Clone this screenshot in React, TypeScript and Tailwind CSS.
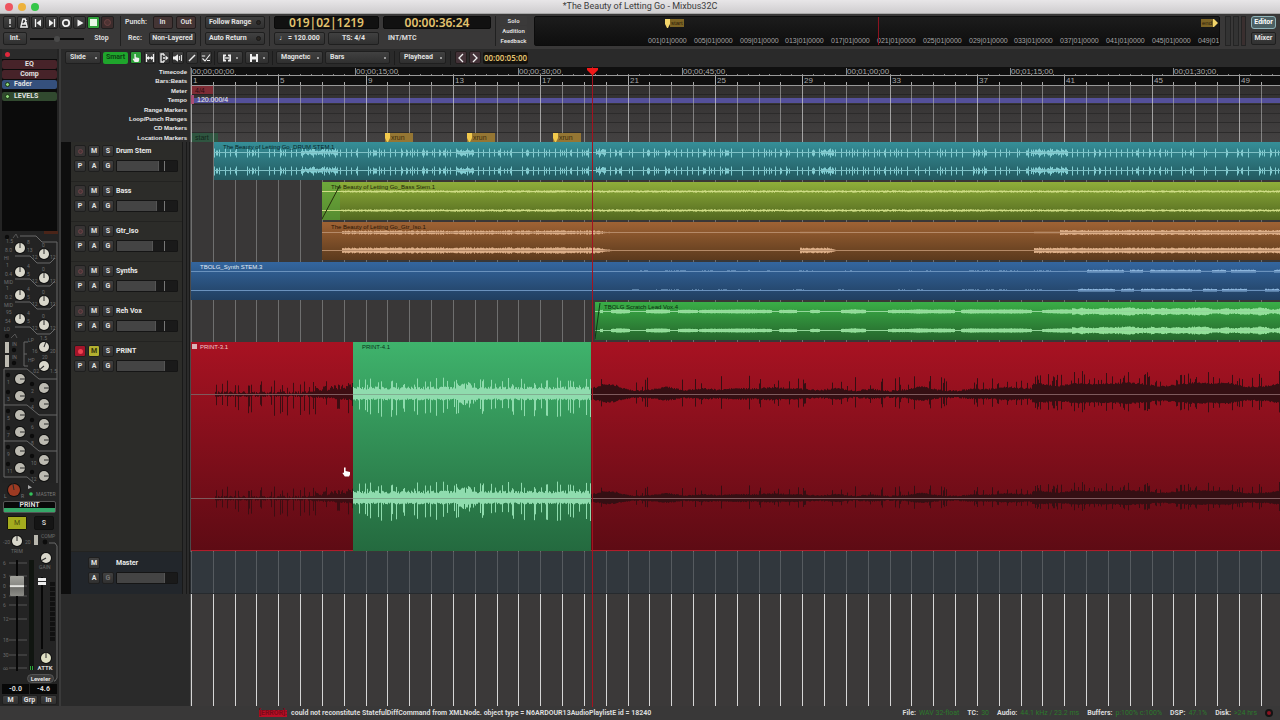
import type { ReactNode } from "react";

const BAR = 21.83;
const SECOND = BAR / 2;
const BARS = 86;
const CANVAS = 1900;

const rand = (n: number) => {
  const s = Math.sin(n * 127.1 + 311.7) * 43758.5453;
  return s - Math.floor(s);
};
const smooth = (x: number, size: number, seed: number) => {
  const i = Math.floor(x / size);
  const f = x / size - i;
  return rand(i + seed) * (1 - f) + rand(i + 1 + seed) * f;
};

type Envelope = (x: number, channel: number) => [number, number];

/* Envelopes take the distance from the start of the session in pixels. */
const drumEnv: Envelope = (x) => {
  const burst = [[110, 148], [266, 284], [405, 416], [630, 644], [840, 878]].some(([a, b]) => x > a && x < b);
  const r = rand(x * 3);
  if ((x - 24) % 11 === 0) return [4, 5];
  if ((x - 24) % 11 === 5 && r > 0.3) return [3, 4];
  if (burst) return [1 + r * 2.5, 1 + rand(x * 5) * 2.5];
  return r > 0.88 ? [2, 3] : [0.5, 0.5];
};
const bassEnv: Envelope = (x) => (x < 150 ? [0.4, 0.4] : [0.5 + rand(x) * 0.8, 0.5 + rand(x + 9) * 0.8]);
const guitarEnv: Envelope = (x, c) => {
  if (x > 150 && x < 424) {
    const end = x > 405 ? (424 - x) / 19 : 1;
    const a = (1 + rand(x) * 1.2 + c) * end;
    return [a, a];
  }
  if (x > 608 && x < 646) {
    const a = (c ? 2 + rand(x) : 0.6) * Math.min(1, (646 - x) / 8);
    return [a, a];
  }
  if (x > 842) {
    const a = c ? 2 + rand(x) : x > 868 ? 1.6 + rand(x) : 0.7;
    return [a, a];
  }
  return [0.4, 0.4];
};
const synthEnv: Envelope = (x, c) => {
  const v = smooth(x, 9, 40 + c);
  if (x > 876) return v > 0.3 ? [1.2 + rand(x) * 0.8, 1] : [0.6, 0.5];
  if (x > 440) return v > 0.55 && rand(x) > 0.4 ? [1, 0.4] : [0.4, 0.4];
  return [0.4, 0.4];
};
const voxEnv: Envelope = (x) => {
  if (x < 409) return [0.4, 0.4];
  if (x > 880) {
    const a = 1.4 + smooth(x, 5, 7) * 2 + rand(x);
    return [a, a];
  }
  const v = smooth(x, 13, 3);
  const a = v > 0.3 ? 1 + v + rand(x) * 0.4 : 0.5;
  return [a, a];
};
const hit = (x: number) => x % 11 === 3 || x % 13 === 5 || x % 29 === 2;
const printIntroEnv: Envelope = (x, c) => {
  const k = c ? 0.85 : 1;
  if (x < 24) return [0.4, 0.4];
  const swell = x > 116 ? 2 + ((x - 116) / 46) * 4 : 0.8;
  if (hit(x)) return [(5 + rand(x) * 9) * k, (10 + rand(x + 4) * 12) * k];
  return [(swell + rand(x * 7) * (x > 120 ? 5 : 2.5)) * k, (swell * 0.7 + rand(x * 5) * 2) * k];
};
const printMidEnv: Envelope = (x) => {
  const burst = x > 265 && x < 285 ? 5 : 0;
  if (hit(x)) return [9 + rand(x) * 8, 12 + rand(x + 4) * 11];
  return [5 + rand(x * 3) * 3 + burst * rand(x), 4 + rand(x * 5) * 2 + burst * rand(x + 1)];
};
const printOutroEnv: Envelope = (x, c) => {
  const k = c ? 0.7 : 1;
  const late = x > 840 ? 4 : 0;
  const near = x < 430 ? Math.max(0, 6 - Math.abs(x - 412) * 0.4) : 0;
  const base = 2.5 + smooth(x, 17, 11) * 5 + late + near;
  const peak = rand(x * 11) > (late ? 0.78 : 0.88) ? 4 + rand(x) * 9 : 0;
  return [(base + peak + rand(x) * 1.5) * k, (base * 0.75 + peak * 0.8 + rand(x + 3) * 1.5) * k];
};

function wavePath(from: number, to: number, centre: number, channel: number, env: Envelope) {
  let d = "";
  for (let x = from; x < to; x++) {
    const [up, down] = env(x, channel);
    d += `M${x - from + 0.5} ${(centre - up).toFixed(1)}V${(centre + down).toFixed(1)}`;
  }
  return d;
}

function Wave({ from, to, centres, env, color, line }: { from: number; to: number; centres: number[]; env: Envelope; color: string; line: string }) {
  return (
    <svg className="pointer-events-none absolute inset-0 h-full" width={to - from} aria-hidden="true">
      {centres.map((c, i) => (
        <g key={c}>
          <path d={wavePath(from, to, c, i, env)} stroke={color} strokeWidth="1" fill="none" />
          <path d={`M0 ${c}H${to - from}`} stroke={line} strokeWidth="1" />
        </g>
      ))}
    </svg>
  );
}

function Grid({ color, major }: { color: string; major?: string }) {
  return (
    <svg className="pointer-events-none absolute inset-0 h-full" width={CANVAS} aria-hidden="true">
      {Array.from({ length: BARS }, (_, i) => (
        <rect key={i} x={Math.round(i * BAR)} y="0" width="1" height="100%" fill={i % 4 === 0 && major ? major : color} />
      ))}
    </svg>
  );
}

const face = "rounded-[2px] border border-[#1f1f1f] bg-linear-to-b from-[#414141] to-[#303030] text-[7px] leading-none font-bold text-[#e2e2e2]";

function Btn({ children, className = "", label }: { children?: ReactNode; className?: string; label?: string }) {
  return (
    <button type="button" aria-label={label} className={`flex items-center justify-center whitespace-nowrap ${face} ${className}`}>
      {children}
    </button>
  );
}

function Choice({ label, value, className }: { label: string; value: string; className: string }) {
  return (
    <span className={`relative flex h-[13px] items-center ${className}`}>
      <select aria-label={label} className={`h-full w-full appearance-none pl-[4px] ${face}`}>
        <option>{value}</option>
      </select>
      <span className="pointer-events-none absolute right-[4px] h-[2px] w-[2px] bg-[#999]" />
    </span>
  );
}

const Sep = () => <span className="h-[30px] w-px shrink-0 bg-[#202020]" />;

const Icon = ({ children, size = 10 }: { children: ReactNode; size?: number }) => (
  <svg width={size} height={size} viewBox="0 0 10 10" fill="none" stroke="#f0f0f0" strokeWidth="1.3" aria-hidden="true">
    {children}
  </svg>
);

function Transport() {
  const b = "h-[13px] w-[13px]";
  return (
    <div className="flex gap-px">
      <Btn label="Panic" className={b}><Icon><path d="M5 1v5M5 7.5v1.6" /></Icon></Btn>
      <Btn label="Metronome" className={b}><Icon><path d="M3.8 1h2.4l2 8H1.8zM2.6 6h5M5 6 7.5 2" /></Icon></Btn>
      <Btn label="Go to start" className={b}><Icon><path d="M2.5 1v8" /><path d="M8 1.5v7L3.5 5z" fill="#f0f0f0" stroke="none" /></Icon></Btn>
      <Btn label="Go to end" className={b}><Icon><path d="M7.5 1v8" /><path d="M2 1.5v7L6.5 5z" fill="#f0f0f0" stroke="none" /></Icon></Btn>
      <Btn label="Loop" className={b}><Icon><circle cx="5" cy="5" r="3.2" strokeWidth="1.8" /></Icon></Btn>
      <Btn label="Play" className={b}><Icon><path d="M2.5 1.5v7L8.5 5z" fill="#f0f0f0" stroke="none" /></Icon></Btn>
      <button type="button" aria-label="Stop" className="flex h-[13px] w-[13px] items-center justify-center rounded-[2px] border border-[#1f1f1f] bg-[#2fa03a]">
        <span className="h-[7px] w-[7px] bg-[#e9f7e6]" />
      </button>
      <button type="button" aria-label="Record" className="flex h-[13px] w-[13px] items-center justify-center rounded-[2px] border border-[#1f1f1f] bg-[#3d2c2c]">
        <span className="h-[7px] w-[7px] rounded-full border border-[#6d4343] bg-[#4e3333]" />
      </button>
    </div>
  );
}

function Toggle({ children }: { children: string }) {
  return (
    <button type="button" className={`flex h-[13px] items-center justify-between pr-[3px] pl-[3px] whitespace-nowrap ${face}`}>
      {children}
      <span className="h-[5px] w-[5px] rounded-full border border-[#191919] bg-[#2a2520]" />
    </button>
  );
}

function Minimap() {
  return (
    <div className="relative h-[30px] min-w-0 flex-1 overflow-hidden rounded-[2px] border border-[#0c0c0c] bg-linear-to-b from-[#1c1c1c] to-[#0e0e0e] font-['Liberation_Sans',Arial,sans-serif]">
      <span className="absolute top-[2px] left-[130px] flex items-start">
        <svg width="5" height="9" aria-hidden="true"><path d="M0 0H5V5L3 9H2L0 5Z" fill="#f2d46a" /></svg>
        <span className="h-[8px] bg-[#7d6424] px-[1px] text-[6px] leading-[8px] text-[#2a200a]">start</span>
      </span>
      <span className="absolute top-[2px] right-[1px] flex items-start">
        <span className="h-[8px] bg-[#7d6424] px-[1px] text-[6px] leading-[8px] text-[#2a200a]">end</span>
        <svg width="5" height="8" aria-hidden="true"><path d="M0 0H1L5 4L1 8H0Z" fill="#f2d46a" /></svg>
      </span>
      {Array.from({ length: 13 }, (_, i) => (
        <span key={i} className="absolute bottom-0 text-[7px] leading-[8px] whitespace-nowrap text-[#a5a5a5]" style={{ left: Math.round(113 + i * 45.8) }}>
          {String(1 + i * 4).padStart(3, "0")}|01|0000
        </span>
      ))}
      <span className="absolute inset-y-0 left-[343px] w-px bg-[#8c1320]" />
    </div>
  );
}

function TopBar() {
  const clock = "flex h-[13px] items-center justify-center rounded-[2px] border border-[#0a0a0a] bg-[#111] font-['Noto_Sans'] text-[12px] leading-none font-semibold text-[#e2c26e]";
  return (
    <div className="flex h-[35px] items-start gap-[4px] bg-[#393838] pt-[2px] pr-[4px] pl-[3px]">
      <div className="flex w-[113px] shrink-0 flex-col gap-[3px]">
        <Transport />
        <div className="flex items-center gap-[3px]">
          <Btn className="h-[13px] w-[24px]">Int.</Btn>
          <input
            type="range"
            aria-label="Shuttle speed"
            defaultValue={50}
            className="h-[2px] w-[54px] appearance-none bg-[#0d0d0d] [&::-webkit-slider-thumb]:h-[6px] [&::-webkit-slider-thumb]:w-[6px] [&::-webkit-slider-thumb]:appearance-none [&::-webkit-slider-thumb]:rounded-full [&::-webkit-slider-thumb]:bg-[#4a4a4a]"
          />
          <span className="flex-1 text-center text-[7px] font-bold">Stop</span>
        </div>
      </div>
      <Sep />
      <div className="flex w-[71px] shrink-0 flex-col gap-[3px] text-[7px] font-bold">
        <div className="flex items-center justify-between">
          <span className="w-[24px]">Punch:</span>
          <button type="button" className="h-[13px] w-[20px] rounded-[2px] border border-[#221c1c] bg-[#443535]">In</button>
          <button type="button" className="h-[13px] w-[20px] rounded-[2px] border border-[#221c1c] bg-[#443535]">Out</button>
        </div>
        <div className="flex items-center justify-between">
          <span className="w-[24px] pl-[3px]">Rec:</span>
          <Btn className="h-[13px] w-[47px]">Non-Layered</Btn>
        </div>
      </div>
      <Sep />
      <div className="flex w-[60px] shrink-0 flex-col gap-[3px]">
        <Toggle>Follow Range</Toggle>
        <Toggle>Auto Return</Toggle>
      </div>
      <Sep />
      <div className="flex w-[105px] shrink-0 flex-col gap-[3px]">
        <div className={clock}>019|02|1219</div>
        <div className="grid grid-cols-2 gap-[3px]">
          <Btn className="h-[13px]">♩ = 120.000</Btn>
          <Btn className="h-[13px]">TS: 4/4</Btn>
        </div>
      </div>
      <div className="flex w-[108px] shrink-0 flex-col gap-[3px]">
        <div className={clock}>00:00:36:24</div>
        <span className="pl-[5px] text-[7px] leading-[13px] font-bold">INT/MTC</span>
      </div>
      <Sep />
      <div className="flex w-[30px] shrink-0 flex-col gap-px text-[6px] font-bold">
        {["Solo", "Audition", "Feedback"].map((t) => (
          <button key={t} type="button" className="mr-[3px] h-[9px] rounded-[1px] bg-[#3b3a3a] leading-[9px]">{t}</button>
        ))}
      </div>
      <Minimap />
      <div className="flex h-[30px] w-[23px] shrink-0 gap-[2px] pl-[1px]">
        <span className="w-[6px] border border-[#242424] bg-[#333]" />
        <span className="w-[6px] border border-[#242424] bg-[#333]" />
        <span className="w-[5px] border border-[#242424] bg-[#3a2f2f]" />
      </div>
      <div className="flex w-[25px] shrink-0 flex-col gap-[3px]">
        <button type="button" className="h-[13px] rounded-[3px] border border-[#8fb3b8] bg-[#4c6064] text-[7px] leading-none font-bold text-white">Editor</button>
        <Btn className="h-[13px]">Mixer</Btn>
      </div>
    </div>
  );
}

function EditBar() {
  const b = "h-[13px] w-[12px]";
  return (
    <div className="flex h-[17px] items-center gap-[2px] overflow-hidden bg-[#2a2a2a] pl-[4px]">
      <Choice label="Edit mode" value="Slide" className="w-[36px]" />
      <button type="button" className="h-[12px] w-[25px] rounded-[2px] bg-[#1fa52c] text-[7px] leading-none font-bold text-[#0b4412]">Smart</button>
      <button type="button" aria-label="Grab" className="flex h-[13px] w-[12px] items-center justify-center rounded-[2px] border border-[#1f1f1f] bg-[#2fa03a]">
        <Icon><path d="M3.4 1h1.4v3.2l3.4.9V7L7.4 9H3.6L1.6 6l.8-.6 1 .8z" fill="#f0f0f0" stroke="none" /></Icon>
      </button>
      <Btn label="Range" className={b}><Icon><path d="M1.5 1v8M8.5 1v8M2 5h6" /><path d="M1.5 5 4 3v4zM8.5 5 6 3v4z" fill="#f0f0f0" stroke="none" /></Icon></Btn>
      <Btn label="Cut" className={b}><Icon><path d="M5 1H2v8h3M5 1v2M5 7v2M4 5h2" /><path d="M9.5 5 6.5 2.6v4.8z" fill="#f0f0f0" stroke="none" /></Icon></Btn>
      <Btn label="Audition" className={b}><Icon><path d="M0 3.5h2L5 1.2v7.6L2 6.5H0z" fill="#f0f0f0" stroke="none" /><path d="M6.4 3v4M8.4 2v6" strokeWidth="1" /></Icon></Btn>
      <Btn label="Draw" className={b}><Icon><path d="M2 8 8 2" strokeWidth="1.4" /></Icon></Btn>
      <Btn label="Edit contents" className={b}><Icon><path d="M0.8 3h3.4M1.5 5.5 4 8 9 1.5M6 7.5h3" strokeWidth="1.1" /></Icon></Btn>
      <span className="h-[14px] w-px bg-[#1c1c1c]" />
      <button type="button" aria-label="Zoom focus" className={`flex h-[13px] w-[26px] items-center justify-between px-[4px] ${face}`}>
        <Icon><path d="M1 1.5h3v1.8H2.7v3.4H4v1.8H1zM9 1.5H6v1.8h1.3v3.4H6v1.8h3z" fill="#f0f0f0" stroke="none" /><path d="M3 5h4" /></Icon>
        <span className="h-[2px] w-[2px] bg-[#999]" />
      </button>
      <button type="button" aria-label="Track height" className={`flex h-[13px] w-[24px] items-center justify-between px-[3px] ${face}`}>
        <Icon><path d="M1 1h2v2.6h4V1h2v8H7V6.4H3V9H1z" fill="#f0f0f0" stroke="none" /></Icon>
        <span className="h-[2px] w-[2px] bg-[#999]" />
      </button>
      <span className="mx-px h-[14px] w-px bg-[#1c1c1c]" />
      <Choice label="Snap mode" value="Magnetic" className="w-[47px]" />
      <Choice label="Snap to" value="Bars" className="w-[65px]" />
      <span className="mx-[2px] h-[14px] w-px bg-[#1c1c1c]" />
      <Choice label="Edit point" value="Playhead" className="w-[47px]" />
      <span className="mx-[2px] h-[14px] w-px bg-[#1c1c1c]" />
      <button type="button" aria-label="Nudge back" className="flex h-[13px] w-[12px] items-center justify-center rounded-[2px] border border-[#221c1c] bg-[#443238]">
        <Icon><path d="M7 1 3 5l4 4" /></Icon>
      </button>
      <button type="button" aria-label="Nudge forward" className="flex h-[13px] w-[12px] items-center justify-center rounded-[2px] border border-[#221c1c] bg-[#443238]">
        <Icon><path d="M3 1l4 4-4 4" /></Icon>
      </button>
      <div className="flex h-[12px] w-[45px] items-center justify-center rounded-[2px] bg-[#14120e] font-['Noto_Sans'] text-[8px] leading-none font-semibold text-[#e2c26e]">00:00:05:00</div>
    </div>
  );
}

/* ---------- mixer strip ---------- */

function Knob({ x, y, a = 0, r = 5, fill = "#d9d7cb" }: { x: number; y: number; a?: number; r?: number; fill?: string }) {
  return (
    <g transform={`translate(${x} ${y})`}>
      <circle r={r + 1} fill="#101010" />
      <circle r={r} fill={fill} />
      <path d={`M0 0V${-r - 1}`} stroke="#2b2b2b" strokeWidth="1" transform={`rotate(${a})`} />
    </g>
  );
}

const stripLine = { fill: "none", stroke: "#686868", strokeWidth: 1 };

function EqPanel() {
  const leds: [number, number][] = [[7, 5], [7, 104], [14, 118], [14, 131]];
  const left = [17, 41, 64, 88];
  const groups = [138, 174, 210];
  return (
    <svg width="58" height="252" className="block" role="img" aria-label="EQ and mix bus sends">
      <rect x="2" width="56" height="252" fill="#232323" />
      <rect x="44" width="14" height="3" fill="#4a2418" />
      <path d="M20 5H36L42 11H57V148" {...stripLine} />
      {[26, 49, 72].map((y) => <path key={y} d={`M15 ${y - 1}H30L37 ${y + 6}H50L55 ${y + 1}`} {...stripLine} />)}
      <path d="M15 96H30L37 103H50L55 98M28 111H24V135H28M24 123H27" {...stripLine} />
      <path d="M13 7 16 3 18 7M11 107 15 103 17 107" fill="none" stroke="#555" />
      {left.map((y, i) => (
        <g key={y}>
          <g fill="#6e6e6e" fontSize="5">
            <text x="6" y={y - 5}>{["1.5", "1", "1", "95"][i]}</text>
            <text x="5" y={y + 4}>{["8.0", "0.4", "0.2", "54"][i]}</text>
            <text x="27" y={y - 4}>{i ? "4" : "8"}</text>
            <text x="27" y={y + 4}>{i ? "5" : "13"}</text>
            <text x="4" y={y + 12}>{["HI", "MID", "MID", "LO"][i]}</text>
            <text x="42" y={y - 1}>0</text>
            <text x="32" y={y + 11}>12</text>
            <text x="50" y={y + 11}>12</text>
          </g>
          <Knob x={20} y={y} />
          <Knob x={44} y={y + 6} />
        </g>
      ))}
      <g fill="#6e6e6e" fontSize="5">
        <text x="28" y="111">LP</text><text x="40" y="109">1.5</text><text x="32" y="122">16</text><text x="50" y="122">20</text>
        <text x="28" y="131">HP</text><text x="42" y="128">20</text><text x="32" y="142">.02</text><text x="50" y="142">1.5</text>
        <text x="12" y="115">IN</text><text x="12" y="128">IN</text>
      </g>
      <Knob x={44} y={116} a={20} />
      <Knob x={44} y={135} a={-130} />
      <rect x="5" y="111" width="4" height="11" fill="#bdbbb2" />
      <rect x="5" y="124" width="4" height="12" fill="#bdbbb2" />
      {leds.map(([x, y]) => <circle key={`${x}-${y}`} cx={x} cy={y + 1} r="2.2" fill="#0c0c0c" />)}
      {groups.map((y, g) => (
        <g key={y}>
          <path d={`M4 ${y + 36}V${y}H27L39 ${y + 10}H57V${y + 46}`} {...stripLine} />
          {[[20, 10], [44, 19], [20, 27], [44, 35]].map(([x, dy], i) => (
            <g key={i}>
              <circle cx={x - 12} cy={y + dy - 4} r="2.2" fill="#0c0c0c" />
              <text x={x - 13} y={y + dy + 5} fontSize="5" fill="#6e6e6e">{g * 4 + i + 1}</text>
              <Knob x={x} y={y + dy} a={90} fill="#bdbbb2" />
            </g>
          ))}
        </g>
      ))}
      <path d="M4 246H27L34 252" {...stripLine} />
    </svg>
  );
}

function Processor({ name, className, led }: { name: string; className: string; led?: boolean }) {
  return (
    <button type="button" className={`flex h-[9px] items-center rounded-[2px] px-[3px] text-[7px] leading-none font-bold text-[#e2e2e2] ${led ? "gap-[4px]" : "justify-center"} ${className}`}>
      {led && <span className="h-[5px] w-[5px] rounded-full border border-[#16330f] bg-[#8fd67a]" />}
      {name}
    </button>
  );
}

function FaderSection() {
  const marks: [number, string][] = [[30, "6"], [43, "3"], [53, "0"], [63, "3"], [72, "6"], [86, "12"], [107, "18"], [122, "30"], [135, "∞"]];
  return (
    <div className="relative h-[150px]">
      <svg width="59" height="150" className="block" aria-hidden="true">
        <path d="M49 10H55L57 13V145L55 148H54" {...stripLine} />
        <g fill="#6c6c6c" fontSize="5">
          <text x="3" y="11">-20</text><text x="25" y="11">20</text><text x="11" y="20">TRIM</text>
          <text x="41" y="5">COMP</text><text x="39" y="36">GAIN</text>
        </g>
        {marks.map(([y, t]) => (
          <g key={y}>
            <path d={`M9 ${y}H27`} stroke="#555" />
            <text x="3" y={y + 2} fontSize="5" fill="#6c6c6c">{t}</text>
          </g>
        ))}
        <Knob x={17} y={8} />
        <rect x="34" y="2" width="4" height="10" fill="#b9b7ae" />
        <circle cx="45" cy="9" r="2.4" fill="#0c0c0c" />
        <Knob x={46} y={25} a={-120} />
        <rect x="16" y="27" width="2" height="111" fill="#070707" />
        <rect x="29" y="27" width="5" height="110" fill="#101510" />
        <path d="M30.5 133V137M32.5 133V137" stroke="#2fa83c" />
        <rect x="41" y="44" width="2" height="72" fill="#070707" />
        {Array.from({ length: 12 }, (_, i) => <rect key={i} x="50" y={49 + i * 5} width="5" height="4" fill="#111" />)}
        <Knob x={46} y={125} fill="#dfe0c4" />
        <text x="45" y="137" fontSize="6" fontWeight="bold" fill="#d8d8d8" textAnchor="middle">ATTK</text>
      </svg>
      <input
        type="range"
        aria-label="PRINT fader"
        defaultValue={92}
        className="absolute top-[36px] left-[10px] h-[102px] w-[14px] appearance-none bg-transparent [direction:rtl] [writing-mode:vertical-lr] [&::-webkit-slider-thumb]:h-[20px] [&::-webkit-slider-thumb]:w-[14px] [&::-webkit-slider-thumb]:appearance-none [&::-webkit-slider-thumb]:rounded-[1px] [&::-webkit-slider-thumb]:bg-[linear-gradient(#a3a39d,#8a8a85_45%,#e4e4e0_48%,#e4e4e0_54%,#6f6f6b_58%,#8d8d88)]"
      />
      <input
        type="range"
        aria-label="Compressor threshold"
        defaultValue={100}
        className="absolute top-[45px] left-[38px] h-[70px] w-[8px] appearance-none bg-transparent [direction:rtl] [writing-mode:vertical-lr] [&::-webkit-slider-thumb]:h-[7px] [&::-webkit-slider-thumb]:w-[8px] [&::-webkit-slider-thumb]:appearance-none [&::-webkit-slider-thumb]:bg-[linear-gradient(#eee_45%,#333_46%,#333_55%,#eee_56%)]"
      />
      <button type="button" className="absolute bottom-0 left-[27px] h-[9px] w-[27px] rounded-full border border-[#555] bg-[#3c3c3c] text-[6px] leading-none font-bold text-[#e2e2e2]">Leveler</button>
    </div>
  );
}

function MixerStrip() {
  return (
    <aside className="flex w-[61px] shrink-0 flex-col border-r-2 border-[#3a3a3a] bg-[#242424]">
      <div className="mx-[2px] flex min-h-[180px] flex-1 flex-col gap-px bg-[#0b0b0b]">
        <div className="h-[10px] bg-[#2a2a2a] pt-[3px] pl-[3px]">
          <span className="block h-[5px] w-[5px] rounded-full bg-[#e0283c]" />
        </div>
        <Processor name="EQ" className="bg-[#472329]" />
        <Processor name="Comp" className="bg-[#472329]" />
        <Processor name="Fader" led className="bg-[#35507c]" />
        <span className="h-px" />
        <Processor name="LEVELS" led className="bg-[#31492f]" />
      </div>
      <EqPanel />
      <div className="flex h-[17px] items-center">
        <svg width="36" height="17" aria-hidden="true">
          <Knob x={14} y={7} r={6} fill="#9c3a22" a={-10} />
          <path d="M28 2 32 4.5 28 6z" fill="#aaa" />
          <circle cx="31" cy="11" r="1.8" fill="#34c45c" />
          <text x="4" y="15" fontSize="5" fill="#777">L</text>
          <text x="21" y="15" fontSize="5" fill="#777">R</text>
        </svg>
        <span className="self-end text-[5px] leading-[11px] text-[#777]">MASTER</span>
      </div>
      <div className="mx-[3px] mt-px rounded-[2px] border border-[#555] bg-[#090909] text-center text-[7px] leading-[6px] font-bold">
        PRINT
        <div className="h-[4px] bg-[#36a869]" />
      </div>
      <div className="mt-[3px] mb-[3px] flex justify-between pr-[5px] pl-[7px]">
        <button type="button" className="h-[14px] w-[20px] rounded-[1px] border border-[#15150a] bg-[#a4ac1e] text-[7px] leading-none text-[#4b4f10]">M</button>
        <button type="button" className="h-[14px] w-[20px] rounded-[2px] border border-[#101010] bg-[#151515] text-[7px] leading-none font-bold text-[#ccc]">S</button>
      </div>
      <FaderSection />
      <div className="mt-px grid grid-cols-2 gap-px px-[2px] text-center text-[7px] leading-[10px] font-bold">
        <span className="bg-[#080808]">-0.0</span>
        <span className="bg-[#080808]">-4.6</span>
      </div>
      <div className="grid grid-cols-3 gap-[2px] px-[2px] pt-px pb-px">
        <Btn className="h-[10px]">M</Btn>
        <Btn className="h-[10px]">Grp</Btn>
        <Btn className="h-[10px]">In</Btn>
      </div>
    </aside>
  );
}

/* ---------- rulers ---------- */

const rulerNames = ["Timecode", "Bars:Beats", "Meter", "Tempo", "Range Markers", "Loop/Punch Ranges", "CD Markers", "Location Markers"];

function timecode(seconds: number) {
  const m = String(Math.floor(seconds / 60)).padStart(2, "0");
  const s = String(seconds % 60).padStart(2, "0");
  return `00:${m}:${s}:00`;
}

function Rulers() {
  return (
    <div className="flex h-[76px] pt-px font-['Liberation_Sans',Arial,sans-serif]">
      <div className="grid w-[129px] shrink-0 grid-rows-8 bg-[#2a2a2a] pr-[3px] text-right text-[6px] font-bold text-[#eaeaea]">
        {rulerNames.map((n) => <span key={n} className="leading-[10px]">{n}</span>)}
      </div>
      <div className="relative grid min-w-0 flex-1 grid-rows-8 overflow-hidden border-l border-[#555] bg-linear-to-b from-[#2b2929] to-[#444242]">
        <div className="relative z-10 border-b border-[#999] bg-[#0f0f0f] text-[8px] leading-[9px] text-[#a8a8a8]">
          <svg className="absolute inset-0 h-full" width={CANVAS} aria-hidden="true">
            {Array.from({ length: 170 }, (_, i) => <rect key={i} x={Math.round(i * SECOND)} y={i % 15 ? 7 : 1} width="1" height="9" fill="#888" />)}
          </svg>
          {Array.from({ length: 7 }, (_, i) => (
            <span key={i} className="absolute top-0" style={{ left: Math.round(i * 15 * SECOND) + 1 }}>{timecode(i * 15)}</span>
          ))}
        </div>
        <div className="relative z-10 border-b border-[#999] bg-[#0f0f0f] text-[8px] leading-[9px] text-[#a8a8a8]">
          <svg className="absolute inset-0 h-full" width={CANVAS} aria-hidden="true">
            {Array.from({ length: BARS }, (_, i) => <rect key={i} x={Math.round(i * BAR)} y={i % 4 ? 6 : 0} width="1" height="9" fill="#aaa" />)}
          </svg>
          {Array.from({ length: 13 }, (_, i) => (
            <span key={i} className="absolute top-0" style={{ left: Math.round(i * 4 * BAR) + 2 }}>{1 + i * 4}</span>
          ))}
        </div>
        <div className="border-b border-[#262525]">
          <span className="block h-full w-[22px] bg-[#7e2c35] pl-[4px] text-[7px] leading-[9px] text-[#2a0c10]">4/4</span>
        </div>
        <div className="relative border-b border-[#262525] pt-[3px]">
          <div className="h-[5px] bg-[#54509a]" />
          <span className="absolute top-0 left-0 z-10 h-full w-[3px] bg-[#a94d72]" />
          <span className="absolute top-0 left-[6px] z-10 text-[7px] leading-[9px] text-[#eee]">120.000/4</span>
        </div>
        <div className="border-b border-[#2c2b2b]" />
        <div className="border-b border-[#2c2b2b]" />
        <div className="border-b border-[#2c2b2b]" />
        <div className="relative text-[7px] leading-[9px]">
          <span className="absolute inset-y-0 left-0 w-[27px] bg-[#2f5540] pl-[4px] text-[#12261a]">start</span>
          {[194, 276, 362].map((x) => (
            <span key={x} className="absolute inset-y-0 z-10 flex bg-[#957633]" style={{ left: x }}>
              <svg width="5" height="9" aria-hidden="true"><path d="M0 0H5V5L3 9H2L0 5Z" fill="#f2c94c" /></svg>
              <span className="w-[23px] pl-px text-[#3a2c0c]">xrun</span>
            </span>
          ))}
        </div>
        <Grid color="rgba(190,190,190,.55)" major="rgba(220,220,220,.65)" />
      </div>
    </div>
  );
}

/* ---------- tracks ---------- */

function HeaderButton({ t, dim }: { t: string; dim?: boolean }) {
  return <Btn className={`h-[12px] w-[12px] ${dim ? "text-[#777]!" : ""}`}>{t}</Btn>;
}

function GainFader({ name, level }: { name: string; level: number }) {
  return (
    <input
      type="range"
      aria-label={`${name} gain`}
      defaultValue={level}
      className="h-[12px] w-[62px] appearance-none rounded-[1px] border border-[#151515] [&::-webkit-slider-thumb]:h-[10px] [&::-webkit-slider-thumb]:w-px [&::-webkit-slider-thumb]:appearance-none [&::-webkit-slider-thumb]:bg-[#555]"
      style={{ background: `linear-gradient(90deg, #444 0 ${level}%, #1a1a1a ${level}% 78%, #777 78% 80%, #1a1a1a 80%)` }}
    />
  );
}

const MeterColumn = () => (
  <div className="flex w-[8px] gap-px border-x border-[#191919] bg-[#191919]">
    <span className="flex-1 bg-[#2b2b2b]" />
    <span className="flex-1 bg-[#2b2b2b]" />
  </div>
);

function TrackHeader({ name, level, armed }: { name: string; level: number; armed?: boolean }) {
  return (
    <div className="flex w-[129px] shrink-0 bg-[#0e0e0e] pl-[10px]">
      <div className="min-w-0 flex-1 border-b border-[#232321] bg-[#2c2c29] pt-[3px] pl-[3px]">
        <div className="flex items-center gap-[2px]">
          <button type="button" aria-label={`Arm ${name}`} className={`flex h-[12px] w-[12px] items-center justify-center rounded-[2px] border border-[#1f1f1f] ${armed ? "bg-[#a3152a]" : "bg-[#383434]"}`}>
            <span className={`h-[5px] w-[5px] rounded-full ${armed ? "bg-[#f0404f]" : "border border-[#6a4347] bg-[#4a3336]"}`} />
          </button>
          {armed ? (
            <button type="button" className="h-[12px] w-[12px] rounded-[2px] border border-[#1f1f1f] bg-[#b3b030] text-[7px] leading-none font-bold text-[#35350c]">M</button>
          ) : (
            <HeaderButton t="M" />
          )}
          <HeaderButton t="S" />
          <span className="text-[7px] leading-none font-bold whitespace-nowrap text-[#eaeaea]">{name}</span>
        </div>
        <div className="mt-[3px] flex items-center gap-[2px]">
          <HeaderButton t="P" />
          <HeaderButton t="A" />
          <HeaderButton t="G" />
          <GainFader name={name} level={level} />
        </div>
      </div>
      <MeterColumn />
    </div>
  );
}

function Region({ title, start, width, className, titleClass, children }: { title?: string; start: number; width?: number; className: string; titleClass?: string; children: ReactNode }) {
  return (
    <div className={`relative shrink-0 overflow-hidden ${width ? "" : "flex-1"} ${className}`} style={{ marginLeft: start, width }}>
      {children}
      {title && (
        <span className={`absolute top-px left-[9px] font-['Liberation_Sans',Arial,sans-serif] text-[6px] leading-[8px] whitespace-nowrap ${titleClass}`}>{title}</span>
      )}
    </div>
  );
}

function Track({ name, level, armed, tall, children }: { name: string; level: number; armed?: boolean; tall?: boolean; children: ReactNode }) {
  return (
    <section className={`flex ${tall ? "h-[210px]" : "h-[40px]"}`} aria-label={name}>
      <TrackHeader name={name} level={level} armed={armed} />
      <div className={`relative flex min-w-0 flex-1 overflow-hidden border-l border-[#4a4a4a] bg-[#393737] ${tall ? "pb-px" : "pb-[2px]"}`}>
        <Grid color="#6f6f6f" />
        {children}
      </div>
    </section>
  );
}

function Tracks() {
  return (
    <>
      <Track name="Drum Stem" level={69}>
        <Region title="The Beauty of Letting Go_DRUM STEM.1" start={23} className="bg-linear-to-b from-[#368f98] to-[#235a60]" titleClass="text-[#06262a]">
          <Wave from={24} to={CANVAS} centres={[10.5, 28.5]} env={drumEnv} color="#83ced3" line="#7fc0c5" />
        </Region>
      </Track>
      <Track name="Bass" level={66}>
        <Region title="The Beauty of Letting Go_Bass Stem.1" start={131} className="bg-linear-to-b from-[#8fae3a] to-[#52681f]" titleClass="text-[#1c2406]">
          <div className="absolute inset-y-0 left-0 w-[18px] bg-[#58a53c]/60" />
          <Wave from={131} to={CANVAS} centres={[9.5, 28.5]} env={bassEnv} color="#c8d67e" line="#cfdd86" />
          <svg className="absolute inset-0 h-full w-[20px]" aria-hidden="true"><path d="M0 37 18 3" stroke="#26300c" /></svg>
        </Region>
      </Track>
      <Track name="Gtr_Iso" level={60}>
        <Region title="The Beauty of Letting Go_Gtr_Iso.1" start={131} className="bg-linear-to-b from-[#9f6334] to-[#5c3a1d]" titleClass="text-[#281405]">
          <Wave from={131} to={CANVAS} centres={[10.5, 28.5]} env={guitarEnv} color="#dcae88" line="#b58a68" />
        </Region>
      </Track>
      <Track name="Synths" level={64}>
        <Region title="TBOLG_Synth STEM.3" start={0} className="bg-linear-to-b from-[#34669f] to-[#213f60]" titleClass="text-[#e2ebf5]">
          <Wave from={0} to={CANVAS} centres={[9.5, 28.5]} env={synthEnv} color="#8db6dd" line="#6a92bd" />
        </Region>
      </Track>
      <Track name="Reh Vox" level={64}>
        <Region title="TBOLG Scratch Lead Vox.4" start={404} className="bg-linear-to-b from-[#3aae47] to-[#25662c]" titleClass="text-[#072b0c]">
          <Wave from={404} to={CANVAS} centres={[9.5, 28.5]} env={voxEnv} color="#93e09a" line="#93d69a" />
          <svg className="absolute inset-0 h-full w-[8px]" aria-hidden="true"><path d="M0 37 5 1" stroke="#0d3a14" /></svg>
        </Region>
      </Track>
      <Track name="PRINT" level={79} armed tall>
        <Region title="PRINT-3.1" start={0} width={162} className="border-b border-[#b01c2c] bg-linear-to-b from-[#a81222] to-[#5e0b14]" titleClass="text-[#f0c8cc]">
          <span className="absolute top-[2px] left-[1px] h-[5px] w-[5px] bg-[#d8b4b8]" />
          <Wave from={0} to={162} centres={[52.5, 156.5]} env={printIntroEnv} color="#3d0d12" line="#7f5a5d" />
        </Region>
        <Region title="PRINT-4.1" start={0} width={238} className="bg-linear-to-b from-[#3fb36c] to-[#246a3f]" titleClass="text-[#08331a]">
          <Wave from={162} to={400} centres={[52.5, 156.5]} env={printMidEnv} color="#8fdcae" line="#7fae90" />
        </Region>
        <Region start={0} className="border-b border-[#b01c2c] bg-linear-to-b from-[#a81222] to-[#5e0b14]">
          <Wave from={400} to={CANVAS} centres={[52.5, 156.5]} env={printOutroEnv} color="#350f13" line="#7f5a5d" />
        </Region>
        <svg className="absolute top-[125px] left-[151px]" width="9" height="10" viewBox="0 0 9 10" aria-hidden="true">
          <path d="M2 0.5H3.6V4L8 5V7.5L7 9.5H2.8L0.5 6.2 1 5.4 2 6Z" fill="#fff" />
        </svg>
      </Track>
      <section className="flex h-[42px]" aria-label="Master">
        <div className="flex w-[129px] shrink-0 bg-[#0e0e0e] pl-[10px]">
          <div className="min-w-0 flex-1 bg-[#22262b] pt-[5px] pl-[17px]">
            <div className="flex items-center gap-[2px]">
              <HeaderButton t="M" />
              <span className="w-[12px]" />
              <span className="text-[7px] leading-none font-bold text-[#eaeaea]">Master</span>
            </div>
            <div className="mt-[3px] flex items-center gap-[2px]">
              <HeaderButton t="A" />
              <HeaderButton t="G" dim />
              <GainFader name="Master" level={79} />
            </div>
          </div>
          <MeterColumn />
        </div>
        <div className="relative min-w-0 flex-1 overflow-hidden border-b border-l border-[#262a2e] bg-[#31373d]">
          <Grid color="#565b60" />
        </div>
      </section>
    </>
  );
}

function Editor() {
  return (
    <main className="flex min-w-0 flex-1 flex-col">
      <EditBar />
      <div className="relative flex flex-1 flex-col">
        <Rulers />
        <Tracks />
        <div className="flex min-h-[60px] flex-1">
          <div className="w-[129px] shrink-0 bg-[#2a2a2a]" />
          <div className="relative min-w-0 flex-1 overflow-hidden border-l border-[#4a4a4a] bg-[#3b3939]">
            <Grid color="#d6d6d6" />
          </div>
        </div>
        <svg className="pointer-events-none absolute top-px left-[526px] z-20 h-full w-[11px]" aria-hidden="true">
          <rect x="5" width="1" height="100%" fill="#a3121f" />
          <path d="M0 1H11V3L6 8H5L0 3Z" fill="#f01818" />
        </svg>
      </div>
    </main>
  );
}

const stats: [string, string][] = [
  ["File:", "WAV 32-float"],
  ["TC:", "30"],
  ["Audio:", "44.1 kHz / 23.2 ms"],
  ["Buffers:", "p:100% c:100%"],
  ["DSP:", "47.1%"],
  ["Disk:", ">24 hrs"],
];

function StatusBar() {
  return (
    <footer className="flex h-[14px] items-center justify-between bg-[#393838] pr-[7px] pl-[259px] text-[7px] whitespace-nowrap">
      <p className="flex gap-[4px] font-bold">
        <span className="bg-[#b80f26] leading-[7px] text-[#7d0a18]">[ERROR]:</span>
        <span className="leading-[7px]">could not reconstitute StatefulDiffCommand from XMLNode. object type = N6ARDOUR13AudioPlaylistE id = 18240</span>
      </p>
      <div className="flex items-center gap-[8px]">
        {stats.map(([k, v]) => (
          <span key={k} className="flex gap-[3px]">
            <b>{k}</b>
            <span className="text-[#2c7a2c]">{v}</span>
          </span>
        ))}
        <span className="h-[8px] w-[8px] rounded-full border-2 border-[#141414] bg-[#8c1320]" />
      </div>
    </footer>
  );
}

export default function App() {
  return (
    <div className="flex min-h-screen flex-col overflow-hidden bg-[#2a2a2a] font-['Roboto','Liberation_Sans',sans-serif] text-[#dcdcdc]">
      <header className="grid h-[14px] grid-cols-[1fr_auto_1fr] items-center border-b border-[#a8a8a8] bg-linear-to-b from-[#e8e6e8] to-[#cfcdcf]">
        <div className="flex gap-[5px] pl-[5px]">
          <button type="button" aria-label="Close" className="h-[8px] w-[8px] rounded-full bg-[#ee5560]" />
          <button type="button" aria-label="Minimize" className="h-[8px] w-[8px] rounded-full bg-[#edb23c]" />
          <button type="button" aria-label="Zoom" className="h-[8px] w-[8px] rounded-full bg-[#35c649]" />
        </div>
        <h1 className="text-[9px] leading-[13px] text-[#3c3c3c]">*The Beauty of Letting Go - Mixbus32C</h1>
      </header>
      <TopBar />
      <div className="flex flex-1">
        <MixerStrip />
        <Editor />
      </div>
      <StatusBar />
    </div>
  );
}
